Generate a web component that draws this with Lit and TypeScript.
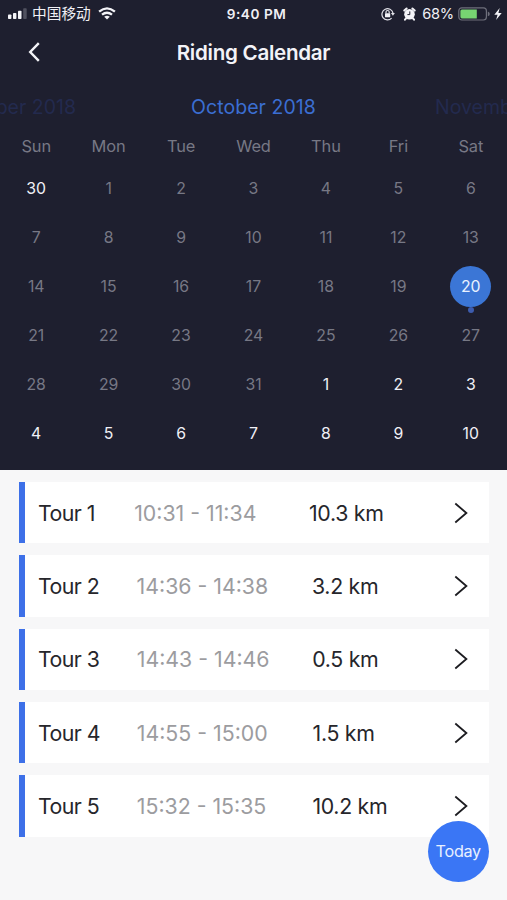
import { LitElement, html, svg, css } from "lit";
import { customElement } from "lit/decorators.js";
import { classMap } from "lit/directives/class-map.js";
import { styleMap } from "lit/directives/style-map.js";

interface Tour {
  name: string;
  time: string;
  distance: string;
  timeStart: number;
  distanceStart: number;
}

const WEEKDAYS = ["Sun", "Mon", "Tue", "Wed", "Thu", "Fri", "Sat"];

const TOURS: Tour[] = [
  { name: "Tour 1", time: "10:31 - 11:34", distance: "10.3 km", timeStart: 96.2, distanceStart: 174.8 },
  { name: "Tour 2", time: "14:36 - 14:38", distance: "3.2 km", timeStart: 98.6, distanceStart: 175.4 },
  { name: "Tour 3", time: "14:43 - 14:46", distance: "0.5 km", timeStart: 98.8, distanceStart: 175.4 },
  { name: "Tour 4", time: "14:55 - 15:00", distance: "1.5 km", timeStart: 98.8, distanceStart: 175.8 },
  { name: "Tour 5", time: "15:32 - 15:35", distance: "10.2 km", timeStart: 98.8, distanceStart: 175.6 },
];

@customElement("status-bar")
export class StatusBar extends LitElement {
  static styles = css`
    :host { display: grid; grid-template-columns: 1fr auto 1fr; align-items: center; height: 27px; color: #f0f0f5; font-size: 14px; line-height: 18px; box-sizing: border-box; }
    .left, .right { display: flex; align-items: center; }
    .left { padding-left: 8px; }
    .right { justify-content: flex-end; padding-right: 5px; }
    .carrier { font: 14.7px/20px "Noto Sans CJK SC", sans-serif; margin: -2px 7px 0 5px; }
    .time { font-weight: 600; font-size: 13.6px; letter-spacing: 0.55px; padding-left: 6px; }
    .percent { margin: 0 4px 0 6px; font-size: 14.6px; letter-spacing: -0.2px; }
    svg { display: block; flex: none; }
    .alarm { margin-left: 8px; }
    .bolt { margin-left: 4px; }
  `;
  render() {
    return html`
      <div class="left">
        <svg width="19" height="12" viewBox="0 0 19 12" fill="#f4f4f8">
          <rect x="0" y="6.5" width="3.4" height="4.5" rx=".8" />
          <rect x="5" y="5" width="3.4" height="6" rx=".8" />
          <rect x="10" y="2.8" width="3.5" height="8.2" rx=".8" />
          <rect x="15.2" y=".3" width="3.5" height="10.7" rx=".8" fill="#50515f" />
        </svg>
        <span class="carrier">中国移动</span>
        <svg width="18" height="13" viewBox="0 0 18 13" fill="none" stroke="#f4f4f8" stroke-width="2.3">
          <path d="M1.1 4.7Q9-2 16.9 4.7" />
          <path d="M4 7.7Q9 3.7 14 7.7" />
          <path d="M6.2 9.8Q9 7.5 11.8 9.8L9 12.6Z" fill="#f4f4f8" stroke="none" />
        </svg>
      </div>
      <span class="time">9:40 PM</span>
      <div class="right">
        <svg width="14" height="14" viewBox="0 0 14 14" fill="none" stroke="#e2e2e9" stroke-width="1.2">
          <path d="M10.6 11.2A5.6 5.6 0 1 1 12 6" />
          <path d="M9.9 6h4l-2 2.8z" fill="#e2e2e9" stroke="none" />
          <rect x="4" y="6.2" width="5.2" height="4" rx=".5" fill="#f2f2f7" stroke="none" />
          <path d="M5 6.5V5.1a1.6 1.6 0 0 1 3.2 0v1.4" />
        </svg>
        <svg class="alarm" width="13" height="14" viewBox="0 0 13 14" fill="none">
          <path d="M1.3 3.6L3.6 1.5M9.4 1.5L11.7 3.6M3 11.3l-1 1.3M10 11.3l1 1.3" stroke="#f4f4f8" stroke-width="2" stroke-linecap="round" />
          <circle cx="6.5" cy="7.3" r="5.3" fill="#f4f4f8" />
          <path d="M6.8 4.4v3.2H4.4" stroke="#1e1f2f" stroke-width="1" />
        </svg>
        <span class="percent">68%</span>
        <svg width="32" height="14" viewBox="0 0 32 14">
          <rect x=".8" y=".8" width="27.6" height="12.2" rx="3" fill="none" stroke="#6e6f7b" stroke-width="1.2" />
          <path d="M2.4 4a1.6 1.6 0 0 1 1.6-1.6H18.8v9H4a1.6 1.6 0 0 1-1.6-1.6z" fill="#77d572" />
          <path d="M29.8 4.6q2 .6 2 2.3t-2 2.3z" fill="#6e6f7b" />
        </svg>
        <svg class="bolt" width="8" height="12" viewBox="0 0 8 12"><path d="M5.7 0L.3 6.7H3.6L2.1 12 7.7 4.9H4.4z" fill="#f4f4f8" /></svg>
      </div>
    `;
  }
}

@customElement("riding-calendar")
export class RidingCalendar extends LitElement {
  static styles = css`
    :host { display: block; overflow: hidden; }
    .months { display: grid; grid-template-columns: 1fr auto 1fr; align-items: center; height: 34px; font-size: 19.5px; white-space: nowrap; color: #232a4e; }
    .current { color: #3b6ed2; letter-spacing: 0.06px; }
    .previous { display: flex; justify-content: flex-end; padding-right: 115px; min-width: 0; }
    .next { padding-left: 119px; min-width: 0; }
    .week { display: grid; grid-template-columns: repeat(7, 1fr); justify-items: center; align-items: center; color: #777885; }
    .names { height: 40.2px; font-size: 16.4px; letter-spacing: -0.1px; padding-top: 3px; box-sizing: border-box; }
    .row { height: 48.9px; font-size: 15.8px; }
    .day { position: relative; display: grid; place-items: center; width: 41px; height: 41px; border-radius: 50%; }
    .outside { color: #f0f0f6; }
    .selected { background: #3b76d6; color: #e8f1ff; }
    .selected::after { content: ""; position: absolute; left: 17.5px; top: 41.5px; width: 6px; height: 6px; border-radius: 50%; background: #3d5cae; }
  `;
  render() {
    const days = Array.from({ length: 42 }, (_, i) => ({
      label: i === 0 ? 30 : i <= 31 ? i : i - 31,
      outside: i === 0 || i > 31,
      selected: i === 20,
    }));
    return html`
      <div class="months">
        <span class="previous">September 2018</span>
        <span class="current">October 2018</span>
        <span class="next">November 2018</span>
      </div>
      <div class="week names">${WEEKDAYS.map((d) => html`<span>${d}</span>`)}</div>
      ${[0, 1, 2, 3, 4, 5].map(
        (w) => html`<div class="week row">
          ${days.slice(w * 7, w * 7 + 7).map(
            (d) => html`<span class=${classMap({ day: true, outside: d.outside, selected: d.selected })}>${d.label}</span>`
          )}
        </div>`
      )}
    `;
  }
}

@customElement("tour-list")
export class TourList extends LitElement {
  static styles = css`
    :host { display: flex; flex-direction: column; gap: 12px; padding: 12.5px 18px 0 19px; }
    .tour { display: grid; grid-template-columns: auto auto 1fr auto; align-items: center; height: 61.3px; box-sizing: border-box; border-left: 6px solid #3d70e8; background: #fff; padding: 0 21px 0 13px; font-size: 21.3px; white-space: nowrap; color: #26262b; }
    .time { color: #9c9c9f; }
    .name { letter-spacing: -0.55px; }
    .distance { letter-spacing: -0.3px; }
    svg { display: block; }
  `;
  render() {
    return TOURS.map(
      (t) => html`<div class="tour">
        <span class="name" style=${styleMap({ width: `${t.timeStart}px` })}>${t.name}</span>
        <span class="time" style=${styleMap({ width: `${t.distanceStart}px` })}>${t.time}</span>
        <span class="distance">${t.distance}</span>
        <svg width="14" height="22" viewBox="0 0 14 22" fill="none" stroke="#1c1c20" stroke-width="1.8">
          ${svg`<path d="M1.3 1.5L12.4 11 1.3 20.5" />`}
        </svg>
      </div>`
    );
  }
}

@customElement("app-root")
export class AppRoot extends LitElement {
  static styles = css`
    :host { display: block; position: relative; height: 900px; overflow: hidden; background: #f7f7f8; font-family: Inter, "Liberation Sans", sans-serif; }
    .top { height: 469.6px; background: #1e1f2f; }
    .nav { display: grid; grid-template-columns: 1fr auto 1fr; align-items: center; height: 50px; margin-bottom: 13px; }
    .back { display: block; margin-left: 28px; }
    .title { margin: 0; font-size: 20.6px; font-weight: 600; line-height: 26px; letter-spacing: -0.28px; padding-top: 1px; color: #f3f3f8; }
    .today { position: absolute; right: 18px; bottom: 18px; width: 61.5px; height: 61.5px; padding: 0; border: 0; border-radius: 50%; background: #3a76f5; color: #e8f0ff; font: 16.2px Inter, sans-serif; letter-spacing: -0.3px; }
  `;
  render() {
    return html`
      <div class="top">
        <status-bar></status-bar>
        <header class="nav">
          <svg class="back" width="13" height="20" viewBox="0 0 13 20" fill="none" stroke="#f4f4f8" stroke-width="2.4"><path d="M10.8 1.2L2.2 10l8.6 8.8" /></svg>
          <h1 class="title">Riding Calendar</h1>
        </header>
        <riding-calendar></riding-calendar>
      </div>
      <tour-list></tour-list>
      <button class="today">Today</button>
    `;
  }
}
